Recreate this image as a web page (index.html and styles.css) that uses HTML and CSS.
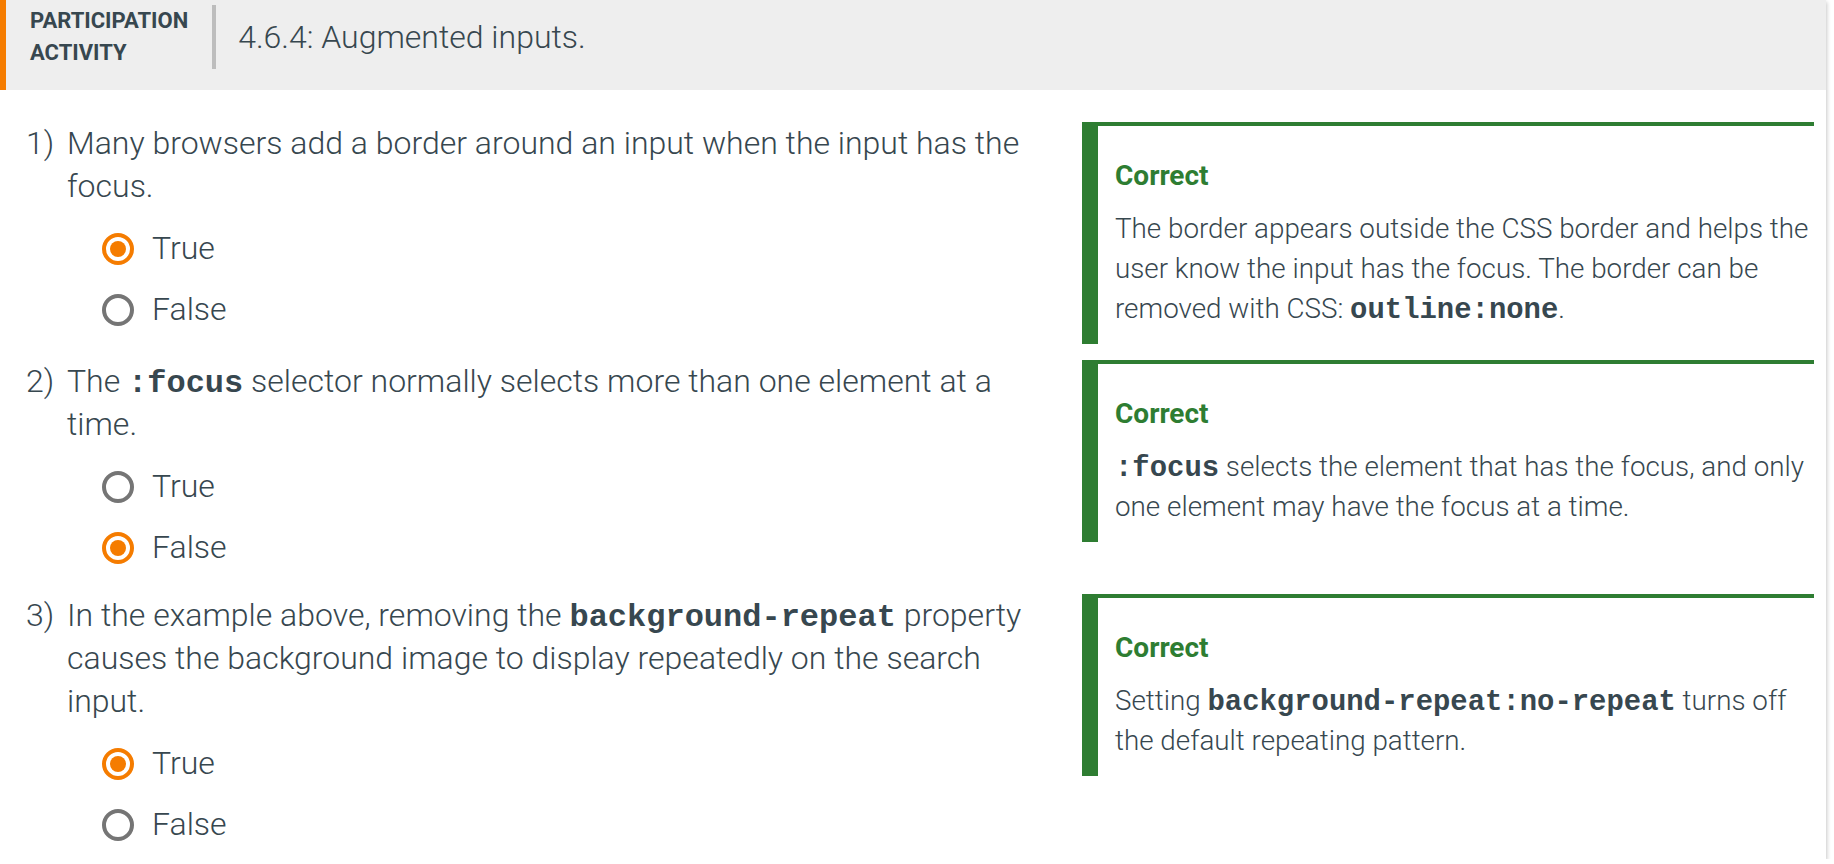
FILE: index.html
```html
<!DOCTYPE html>
<html lang="en">
<head>
<meta charset="utf-8">
<title>4.6.4: Augmented inputs.</title>
<link rel="stylesheet" href="styles.css">
</head>
<body>
<section class="card">
  <header class="act-header">
    <div class="act-label">PARTICIPATION<br>ACTIVITY</div>
    <div class="act-divider"></div>
    <h2 class="act-title">4.6.4: Augmented inputs.</h2>
  </header>

  <div class="questions">
    <div class="q-row">
      <div class="question">
        <span class="q-num">1)</span>
        <div class="q-body">
          <p class="prompt">Many browsers add a border around an input when the input has the focus.</p>
          <div class="options">
            <div class="option"><span class="radio checked"></span><span class="opt-text">True</span></div>
            <div class="option"><span class="radio"></span><span class="opt-text">False</span></div>
          </div>
        </div>
      </div>
      <div class="feedback">
        <div class="fb-title">Correct</div>
        <p class="fb-text">The border appears outside the CSS border and helps the user know the input has the focus. The border can be removed with CSS: <code>outline:none</code>.</p>
      </div>
    </div>

    <div class="q-row">
      <div class="question">
        <span class="q-num">2)</span>
        <div class="q-body">
          <p class="prompt">The <code>:focus</code> selector normally selects more than one element at a time.</p>
          <div class="options">
            <div class="option"><span class="radio"></span><span class="opt-text">True</span></div>
            <div class="option"><span class="radio checked"></span><span class="opt-text">False</span></div>
          </div>
        </div>
      </div>
      <div class="feedback">
        <div class="fb-title">Correct</div>
        <p class="fb-text"><code>:focus</code> selects the element that has the focus, and only one element may have the focus at a time.</p>
      </div>
    </div>

    <div class="q-row last">
      <div class="question">
        <span class="q-num">3)</span>
        <div class="q-body">
          <p class="prompt">In the example above, removing the <code>background-repeat</code> property causes the background image to display repeatedly on the search input.</p>
          <div class="options">
            <div class="option"><span class="radio checked"></span><span class="opt-text">True</span></div>
            <div class="option"><span class="radio"></span><span class="opt-text">False</span></div>
          </div>
        </div>
      </div>
      <div class="feedback">
        <div class="fb-title">Correct</div>
        <p class="fb-text">Setting <code>background-repeat:no-repeat</code> turns off the default repeating pattern.</p>
      </div>
    </div>
  </div>
</section>
</body>
</html>
```

FILE: styles.css
```css
* { box-sizing: border-box; }

html, body {
  margin: 0;
  padding: 0;
  background: #ffffff;
}

body {
  font-family: Roboto, "Liberation Sans", sans-serif;
  color: #37474f;
}

.card {
  width: 1826px;
  background: #ffffff;
  box-shadow: 1px 2px 4px rgba(0, 0, 0, 0.22);
}

.act-header {
  display: flex;
  align-items: center;
  background: #eeeeee;
  border-left: 6px solid #f57c00;
  padding: 5px 0 21px 24px;
}

.act-label {
  font-size: 22px;
  font-weight: 700;
  line-height: 32px;
  color: #37474f;
}

.act-divider {
  width: 4px;
  height: 64px;
  background: #bdbdbd;
  margin: 0 22px 0 24px;
}

.act-title {
  margin: 0;
  font-size: 32px;
  font-weight: 300;
  line-height: 40px;
  color: #37474f;
}

.questions {
  padding: 32px 12px 4px 26px;
}

.q-row {
  display: flex;
  align-items: flex-start;
  margin-bottom: 16px;
}

.q-row.last {
  margin-bottom: 0;
}

.question {
  flex: 1;
  display: flex;
  align-items: flex-start;
  padding-right: 37px;
}

.q-num {
  flex: 0 0 41px;
  font-size: 32px;
  font-weight: 300;
  line-height: 43px;
}

.q-body {
  flex: 1;
}

.prompt {
  margin: 0;
  font-size: 32px;
  font-weight: 300;
  line-height: 43px;
}

code {
  font-family: "Liberation Mono", "Courier New", monospace;
  font-weight: 700;
  font-size: 1em;
  line-height: 1;
}

.options {
  padding: 10px 0 0 35px;
}

.option {
  display: flex;
  align-items: center;
  height: 61px;
}

.radio {
  flex: 0 0 32px;
  width: 32px;
  height: 32px;
  border: 4px solid #757575;
  border-radius: 50%;
  display: flex;
  align-items: center;
  justify-content: center;
}

.radio.checked {
  border-color: #f57c00;
}

.radio.checked::after {
  content: "";
  width: 16px;
  height: 16px;
  border-radius: 50%;
  background: #f57c00;
}

.opt-text {
  margin-left: 18px;
  font-size: 32px;
  font-weight: 300;
  line-height: 43px;
}

.feedback {
  flex: 0 0 732px;
  width: 732px;
  border-top: 4px solid #2e7d32;
  border-left: 16px solid #2e7d32;
  padding: 32px 0 15px 17px;
}

.fb-title {
  font-size: 28px;
  font-weight: 700;
  line-height: 36px;
  color: #2e7d32;
  margin-bottom: 15px;
}

.fb-text {
  margin: 0 -1px 0 0;
  font-size: 27.8px;
  font-weight: 300;
  line-height: 40px;
}

.fb-text code {
  font-size: 1.04em;
}
```
